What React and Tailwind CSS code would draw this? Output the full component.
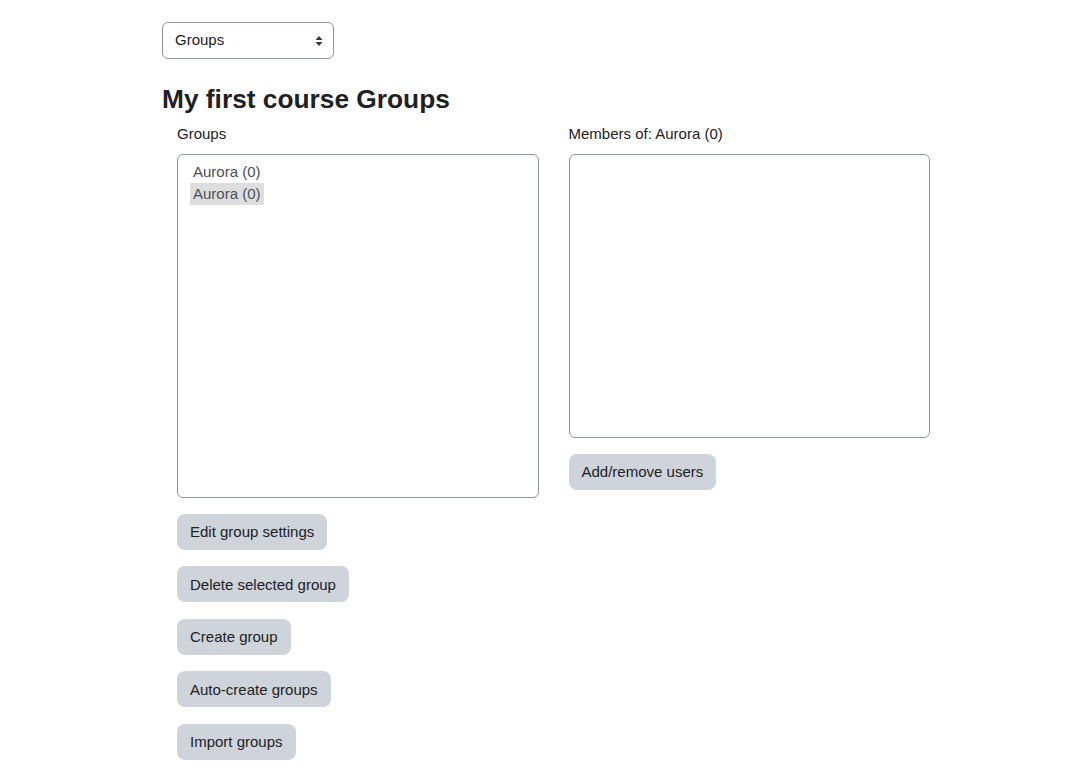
import React from "react";

const FONT = { fontFamily: '"Liberation Sans", Arial, sans-serif' };

function Btn({ children }) {
  return (
    <button
      type="button"
      className="h-[36px] px-[13px] rounded-[8px] bg-[#ced4da] text-[15px] text-[#1d2125] leading-none"
    >
      {children}
    </button>
  );
}

export default function App() {
  const groups = ["Aurora (0)", "Aurora (0)"];

  return (
    <div className="min-h-[770px] bg-white text-[#1d2125]" style={FONT}>
      <div className="w-[783px] ml-[162px] pt-[22px]">
        {/* Selector */}
        <div className="w-[172px] h-[37px] border border-[#8f959e] rounded-[6px] flex items-center justify-between pl-[12px] pr-[10px] text-[15px] text-[#1d2125]">
          <span>Groups</span>
          <svg width="8" height="12" viewBox="0 0 8 12" aria-hidden>
            <path d="M4 1 L7.5 5 H0.5 Z" fill="#343a40" />
            <path d="M4 11 L7.5 7 H0.5 Z" fill="#343a40" />
          </svg>
        </div>

        <h2 className="mt-[25px] text-[26.3px] font-bold leading-[1.2]">My first course Groups</h2>

        <div className="grid grid-cols-2 mt-[7px]">
          {/* Left column */}
          <div className="px-[15px]">
            <div className="text-[15px] leading-[22px]">Groups</div>
            <div className="mt-[9px] h-[344px] border border-[#8f959e] rounded-[6px] pt-[6px] px-[12px]">
              {groups.map((g, i) => (
                <div
                  key={i}
                  className={
                    "block w-max h-[22px] px-[3px] text-[15px] leading-[22px] text-[#495057] " +
                    (i === 1 ? "bg-[#dedede]" : "")
                  }
                >
                  {g}
                </div>
              ))}
            </div>
            <div className="flex flex-col items-start gap-[16.5px] mt-[16px]">
              <Btn>Edit group settings</Btn>
              <Btn>Delete selected group</Btn>
              <Btn>Create group</Btn>
              <Btn>Auto-create groups</Btn>
              <Btn>Import groups</Btn>
            </div>
          </div>

          {/* Right column */}
          <div className="px-[15px]">
            <div className="text-[15px] leading-[22px]">Members of: Aurora (0)</div>
            <div className="mt-[9px] h-[284px] border border-[#8f959e] rounded-[6px]" />
            <div className="mt-[16px]">
              <Btn>Add/remove users</Btn>
            </div>
          </div>
        </div>
      </div>
    </div>
  );
}
